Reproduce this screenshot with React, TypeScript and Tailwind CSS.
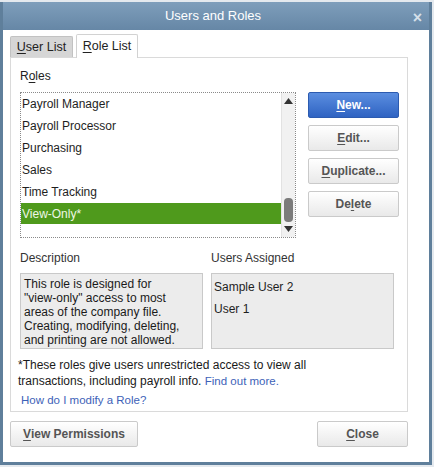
import React from "react";

const F = { fontFamily: '"Liberation Sans", Arial, sans-serif' };

function U({ children }: { children: React.ReactNode }) {
  return <span className="underline underline-offset-2">{children}</span>;
}

function Btn({ children, className = "" }: { children: React.ReactNode; className?: string }) {
  return (
    <div
      className={
        "flex h-[26px] items-center justify-center rounded-[2px] border border-[#cacaca] bg-gradient-to-b from-[#ffffff] to-[#e9e9e9] text-[12px] font-bold text-[#555555] " +
        className
      }
    >
      {children}
    </div>
  );
}

export default function App() {
  const roles = ["Payroll Manager", "Payroll Processor", "Purchasing", "Sales", "Time Tracking"];
  return (
    <div className="h-[467px] w-[434px] overflow-hidden bg-[#e4e9ee]" style={F}>
      <div className="mt-[2px] flex h-[463px] w-[432px] flex-col border-x-[3px] border-b-[3px] border-[#5f7f9b] bg-white">
        {/* title bar */}
        <div className="relative flex h-[28px] shrink-0 items-center justify-center bg-gradient-to-b from-[#7e9ebb] to-[#6687a6] text-[13px] text-white">
          <span className="ml-[-6px]">Users and Roles</span>
          <span className="absolute right-[7px] top-[4px] text-[16px] font-bold text-[#d5e0ea]">×</span>
        </div>

        <div className="flex flex-1 flex-col pl-[7px]">
          {/* tabs */}
          <div className="mt-[4px] flex items-end text-[12.5px] text-[#222]">
            <div className="flex h-[21px] w-[63px] items-center justify-center rounded-t-[2px] border border-b-0 border-[#c2c2c2] bg-[#d6d6d6]">
              <span><U>U</U>ser List</span>
            </div>
            <div className="relative z-10 -mb-px ml-[3px] flex h-[24px] w-[62px] items-center justify-center rounded-t-[2px] border border-b-0 border-[#d2d2d2] bg-white">
              <span><U>R</U>ole List</span>
            </div>
          </div>

          {/* panel */}
          <div className="flex h-[355px] w-[398px] flex-col border border-[#dadada] pl-[9px] text-[12px] text-[#1e1e1e]">
            <div className="mt-[10px] leading-[16px] text-[#222]">
              R<U>o</U>les
            </div>

            <div className="mt-[8px] flex">
              {/* listbox */}
              <div className="flex h-[146px] w-[276px] border border-dotted border-[#8a8a8a]">
                <div className="flex flex-1 flex-col">
                  {roles.map((r) => (
                    <div key={r} className="flex h-[22px] items-center pl-[1px]">
                      {r}
                    </div>
                  ))}
                  <div className="flex h-[21px] items-center bg-[#4f9a1c] pl-[1px] text-[#eef7e6]">View-Only*</div>
                </div>
                <div className="relative flex w-[14px] flex-col items-center border-l border-[#e2e2e2] bg-[#f1f1f1]">
                  <svg width="9" height="6" viewBox="0 0 9 6" className="mt-[5px]">
                    <polygon points="4.5,0 9,6 0,6" fill="#333" />
                  </svg>
                  <div className="absolute left-[2px] top-[105px] h-[24px] w-[9px] rounded-[4px] bg-[#7b7b7b]" />
                  <svg width="9" height="6" viewBox="0 0 9 6" className="mt-auto mb-[5px]">
                    <polygon points="0,0 9,0 4.5,6" fill="#333" />
                  </svg>
                </div>
              </div>

              {/* buttons */}
              <div className="ml-[12px] flex w-[91px] flex-col gap-[7px]">
                <div className="flex h-[26px] items-center justify-center rounded-[2px] border border-[#2c5bb0] bg-gradient-to-b from-[#5b8ee0] to-[#2f63c2] text-[12px] font-bold text-white">
                  <span><U>N</U>ew...</span>
                </div>
                <Btn><span><U>E</U>dit...</span></Btn>
                <Btn><span><U>D</U>uplicate...</span></Btn>
                <Btn><span>De<U>l</U>ete</span></Btn>
              </div>
            </div>

            {/* description / users */}
            <div className="mt-[13px] flex gap-[8px]">
              <div className="flex w-[183px] flex-col">
                <div className="leading-[14px] text-[#333]">Description</div>
                <div className="mt-[8px] h-[76px] whitespace-nowrap border border-[#c9c9c9] bg-[#ececec] px-[3px] pt-[3px] leading-[14px] text-[#1a1a1a]">
                  This role is designed for
                  <br />
                  "view-only" access to most
                  <br />
                  areas of the company file.
                  <br />
                  Creating, modifying, deleting,
                  <br />
                  and printing are not allowed.
                </div>
              </div>
              <div className="flex w-[183px] flex-col">
                <div className="leading-[14px] text-[#333]">Users Assigned</div>
                <div className="mt-[8px] h-[76px] border border-[#c9c9c9] bg-[#ececec] px-[2px] pt-[2px]">
                  <div className="flex h-[22px] items-center">Sample User 2</div>
                  <div className="flex h-[22px] items-center">User 1</div>
                </div>
              </div>
            </div>

            <div className="-ml-[2px] mt-[8px] leading-[16px] text-[#1a1a1a]">
              *These roles give users unrestricted access to view all
              <br />
              transactions, including payroll info. <span className="text-[11.5px] text-[#3d62b8]">Find out more.</span>
            </div>
            <div className="ml-[1px] mt-[3px] text-[11.5px] leading-[16px] text-[#3d62b8]">How do I modify a Role?</div>
          </div>

          {/* bottom buttons */}
          <div className="mt-[9px] flex w-[398px] justify-between">
            <Btn className="w-[128px]"><span><U>V</U>iew Permissions</span></Btn>
            <Btn className="w-[91px]"><span><U>C</U>lose</span></Btn>
          </div>
        </div>
      </div>
    </div>
  );
}
